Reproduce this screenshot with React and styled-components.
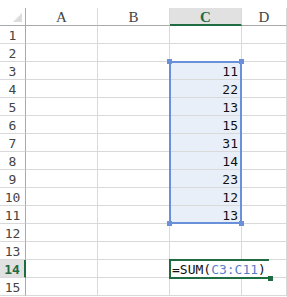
import React from 'react';
import styled, { createGlobalStyle, css } from 'styled-components';

const Global = createGlobalStyle`
  html, body { margin: 0; padding: 0; background: #fff; overflow: hidden; }
  #root { width: 287px; height: 297px; }
`;

const GRID = '#d9d9d9';
const HEAD_LINE = '#a9a9a9';
const GREEN = '#1f6b42';
const BLUE = '#6b90da';
const SEL_BG = '#e9eff9';
const MONO = '"DejaVu Sans Mono", "Liberation Mono", monospace';

const Sheet = styled.div`
  display: grid;
  grid-template-columns: 26px 72px 72px 72px 1fr;
  grid-template-rows: repeat(16, 18px);
  padding-top: 8px;
  width: 287px;
  height: 297px;
  box-sizing: border-box;
  overflow: hidden;
`;

const placed = css`
  grid-row: ${(p) => p.$r};
  grid-column: ${(p) => p.$c};
`;

const Cell = styled.div`
  ${placed};
  box-sizing: border-box;
  border-right: 1px solid ${GRID};
  border-bottom: 1px solid ${GRID};
  background: ${(p) => (p.$sel ? SEL_BG : '#fff')};
  font-family: ${MONO};
  font-size: 13px;
  color: #111;
  display: flex;
  align-items: center;
  justify-content: flex-end;
  padding-right: 3px;
  padding-top: 1px;
  white-space: nowrap;
`;

const Corner = styled.div`
  grid-row: 1;
  grid-column: 1;
  box-sizing: border-box;
  border-right: 1px solid ${HEAD_LINE};
  border-bottom: 1px solid ${HEAD_LINE};
  display: flex;
  align-items: flex-end;
  justify-content: flex-end;
  padding: 0 3px 3px 0;
`;

const Triangle = styled.div`
  width: 0;
  height: 0;
  border-left: 9px solid transparent;
  border-bottom: 9px solid #dcdcdc;
`;

const ColHead = styled.div`
  ${placed};
  box-sizing: border-box;
  border-right: 1px solid ${GRID};
  border-bottom: 1px solid ${HEAD_LINE};
  display: flex;
  align-items: center;
  justify-content: center;
  padding-top: 2px;
  font-family: "Liberation Serif", serif;
  font-size: 15px;
  color: #444;
  ${(p) =>
    p.$active &&
    css`
      background: #e1e1e1;
      color: ${GREEN};
      font-weight: bold;
      border-bottom: 2px solid ${GREEN};
    `}
`;

const RowHead = styled.div`
  ${placed};
  box-sizing: border-box;
  border-right: 1px solid ${HEAD_LINE};
  border-bottom: 1px solid ${GRID};
  display: flex;
  align-items: center;
  justify-content: center;
  padding-top: 1px;
  font-family: ${MONO};
  font-size: 13px;
  color: #444;
  ${(p) =>
    p.$active &&
    css`
      background: #e1e1e1;
      color: ${GREEN};
      font-weight: bold;
      border-right: 2px solid ${GREEN};
    `}
`;

/* Selection range C3:C11, placed on the sheet grid and drawn over the cells */
const Selection = styled.div`
  grid-column: 4;
  grid-row: 4 / 13;
  position: relative;
  z-index: 2;
  margin: -1px 0 0 -1px;
  border: 2px solid ${BLUE};
  pointer-events: none;
`;

const Handle = styled.div`
  position: absolute;
  z-index: 3;
  width: 5px;
  height: 5px;
  background: ${(p) => p.$color || BLUE};
  ${(p) => (p.$top ? 'top: -4px;' : 'bottom: -4px;')}
  ${(p) => (p.$left ? 'left: -4px;' : 'right: -4px;')}
`;

/* In-cell editor for C14, its text overflowing into D14 */
const Editor = styled.div`
  grid-column: 4 / 6;
  grid-row: 15;
  position: relative;
  z-index: 2;
  display: flex;
  margin: -1px 0 0 -1px;
  height: 20px;
  pointer-events: none;
`;

const EditFrame = styled.div`
  position: relative;
  flex: 0 0 74px;
  box-sizing: border-box;
  border: 2px solid ${GREEN};
  border-right: none;
  background: #fff;
  display: flex;
  align-items: center;
  padding-left: 1px;
  padding-top: 1px;
  font-family: ${MONO};
  font-size: 13px;
  color: #111;
  white-space: nowrap;
`;

const Formula = styled.span`
  position: relative;
  z-index: 1;
  background: #fff;
  padding-right: 3px;
`;

const Ref = styled.span`
  color: #5b7fc9;
`;

const cols = ['A', 'B', 'C', 'D'];
const values = { 3: 11, 4: 22, 5: 13, 6: 15, 7: 31, 8: 14, 9: 23, 10: 12, 11: 13 };

export default function App() {
  const cells = [];
  for (let r = 1; r <= 15; r++) {
    cells.push(
      <RowHead key={`h${r}`} $r={r + 1} $c={1} $active={r === 14}>
        {r}
      </RowHead>
    );
    cols.forEach((c, i) => {
      const sel = c === 'C' && r >= 3 && r <= 11;
      cells.push(
        <Cell key={`${c}${r}`} $r={r + 1} $c={i + 2} $sel={sel}>
          {c === 'C' && values[r] !== undefined ? values[r] : ''}
        </Cell>
      );
    });
  }
  return (
    <>
      <Global />
      <Sheet>
        <Corner>
          <Triangle />
        </Corner>
        {cols.map((c, i) => (
          <ColHead key={c} $r={1} $c={i + 2} $active={c === 'C'}>
            {c}
          </ColHead>
        ))}
        {cells}
        <Selection>
          <Handle $top $left />
          <Handle $top />
          <Handle $left />
          <Handle />
        </Selection>
        <Editor>
          <EditFrame>
            <Formula>
              =SUM(<Ref>C3:C11</Ref>)
            </Formula>
            <Handle $color={GREEN} />
          </EditFrame>
        </Editor>
      </Sheet>
    </>
  );
}
